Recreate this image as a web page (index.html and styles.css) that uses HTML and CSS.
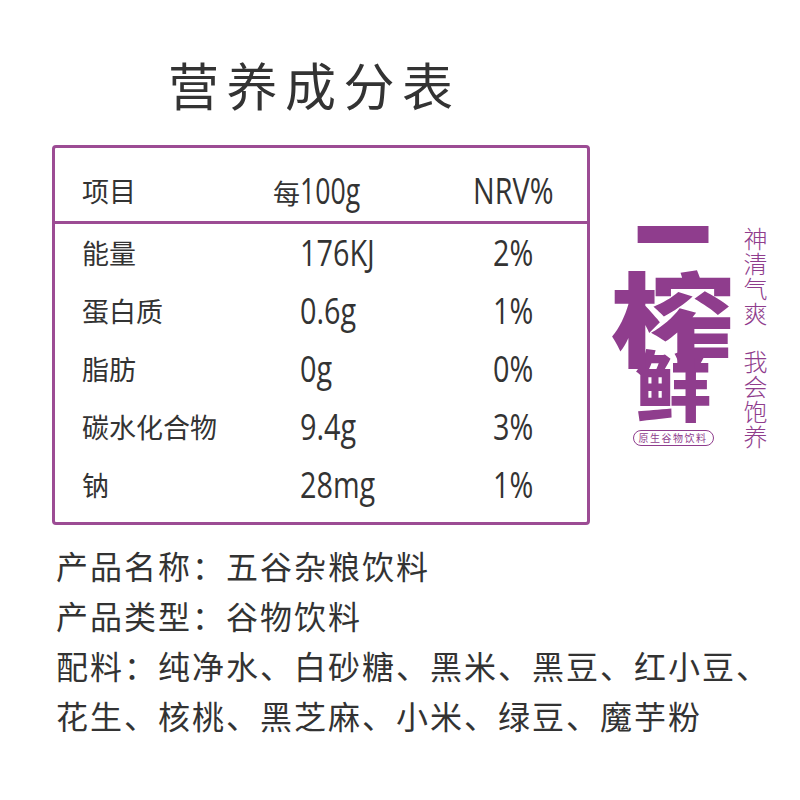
FILE: index.html
```html
<!DOCTYPE html>
<html lang="zh">
<head>
<meta charset="utf-8">
<link rel="stylesheet" href="styles.css">
</head>
<body>
<div class="page">
  <h1 class="title">营养成分表</h1>
  <div class="mid">
    <div class="nutri">
      <div class="row head">
        <span class="c1">项目</span>
        <span class="c2 h2">每<span class="num">100g</span></span>
        <span class="c3"><span class="num">NRV%</span></span>
      </div>
      <div class="row"><span class="c1">能量</span><span class="c2"><span class="num">176KJ</span></span><span class="c3"><span class="num">2%</span></span></div>
      <div class="row"><span class="c1">蛋白质</span><span class="c2"><span class="num">0.6g</span></span><span class="c3"><span class="num">1%</span></span></div>
      <div class="row"><span class="c1">脂肪</span><span class="c2"><span class="num">0g</span></span><span class="c3"><span class="num">0%</span></span></div>
      <div class="row"><span class="c1">碳水化合物</span><span class="c2"><span class="num">9.4g</span></span><span class="c3"><span class="num">3%</span></span></div>
      <div class="row"><span class="c1">钠</span><span class="c2"><span class="num">28mg</span></span><span class="c3"><span class="num">1%</span></span></div>
    </div>
    <div class="logo">
      <div class="marks">
        <span class="m1">一</span>
        <span class="m2">榨</span>
        <span class="m3">鲜</span>
        <span class="pill">原生谷物饮料</span>
      </div>
      <div class="slogans">
        <span class="v">神清气爽</span>
        <span class="v">我会饱养</span>
      </div>
    </div>
  </div>
  <div class="info">
    <p>产品名称：五谷杂粮饮料</p>
    <p>产品类型：谷物饮料</p>
    <p>配料：纯净水、白砂糖、黑米、黑豆、红小豆、<br>花生、核桃、黑芝麻、小米、绿豆、魔芋粉</p>
  </div>
</div>
</body>
</html>
```
FILE: styles.css
```css
body {
  margin: 0;
  background: #fff;
  color: #333;
  font-family: "Noto Sans CJK SC", sans-serif;
}
.page {
  width: 800px;
  height: 800px;
  overflow: hidden;
}
.title {
  margin: 0;
  padding: 53px 0 0 168px;
  font-size: 51px;
  line-height: 62px;
  font-weight: 400;
  letter-spacing: 7.5px;
}
.mid {
  display: flex;
  align-items: flex-start;
  margin-top: 30px;
}
.nutri {
  margin-left: 52px;
  width: 538px;
  height: 380px;
  box-sizing: border-box;
  border: 3px solid #9c4c94;
  border-radius: 4px;
  flex-shrink: 0;
}
.row {
  display: grid;
  grid-template-columns: 218px 140px 1fr;
  align-items: center;
  height: 58px;
  padding-left: 27px;
  line-height: 1.2;
}
.row.head {
  height: 76px;
  box-sizing: border-box;
  padding-top: 13px;
  border-bottom: 3px solid #9c4c94;
}
.c1 {
  font-size: 27px;
}
.h2 {
  margin-left: -27px;
  font-size: 27px;
}
.h2 .num {
  transform: scaleX(0.74);
}
.num {
  display: inline-block;
  font-family: "Open Sans", sans-serif;
  font-size: 36px;
  transform: scaleX(0.8);
  transform-origin: left center;
}
.c3 {
  text-align: center;
}
.c3 .num {
  transform-origin: center center;
}
.logo {
  display: flex;
  margin-left: 15px;
  margin-top: 70px;
  color: #8f3d8d;
}
.marks {
  display: flex;
  flex-direction: column;
  align-items: center;
  width: 136px;
  font-weight: 900;
}
.m1 {
  font-size: 76px;
  line-height: 30px;
  transform: scaleY(1.4);
}
.m2 {
  margin-top: 30px;
  font-size: 102px;
  line-height: 80px;
  transform: scaleX(1.22);
}
.m3 {
  font-size: 76px;
  line-height: 55px;
}
.pill {
  margin-top: 20px;
  font-size: 10px;
  line-height: 14px;
  border: 1px solid #8f3d8d;
  border-radius: 8px;
  padding: 0 5px;
  font-weight: 400;
  letter-spacing: 1.5px;
}
.slogans {
  display: flex;
  flex-direction: column;
  gap: 23px;
  margin-left: 2px;
  margin-top: 12px;
}
.v {
  writing-mode: vertical-rl;
  font-size: 24px;
  line-height: 24px;
  letter-spacing: 1px;
  font-weight: 300;
}
.info {
  padding: 15px 0 0 56px;
  font-size: 32px;
  line-height: 50px;
  letter-spacing: 2px;
}
.info p {
  margin: 0;
}
```
